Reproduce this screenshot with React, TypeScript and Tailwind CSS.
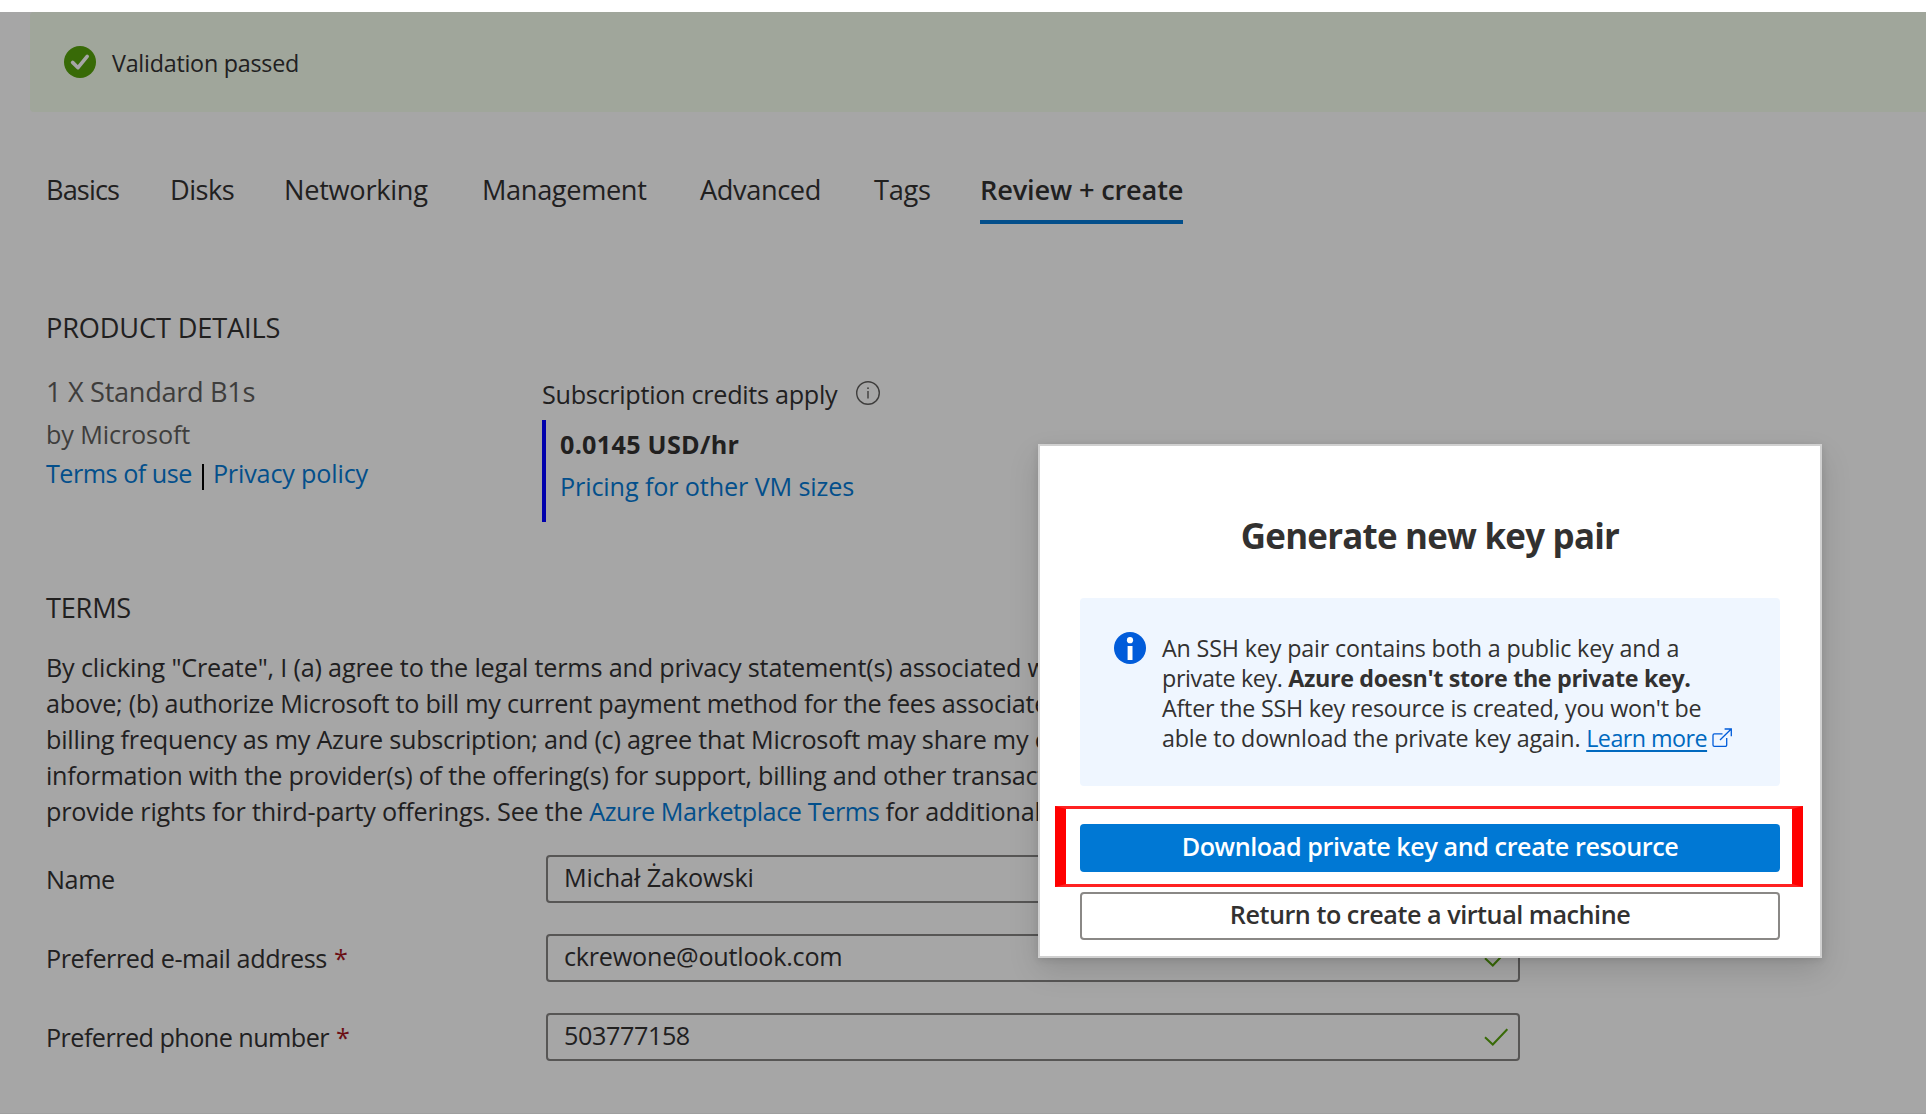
import type { ReactNode } from "react";

function PassedIcon() {
  return (
    <svg viewBox="0 0 32 32" className="mt-[34px] size-8 shrink-0">
      <circle cx="16" cy="16" r="16" fill="#386a07" />
      <path d="M8.6 16.4l5.4 5.3L23.2 10.4" fill="none" stroke="#a6a6a6" strokeWidth="3.6" strokeLinecap="round" strokeLinejoin="round" />
    </svg>
  );
}

function HintIcon() {
  return (
    <svg viewBox="0 0 24 24" className="mt-[5px] size-6 shrink-0">
      <circle cx="12" cy="12" r="11.3" fill="none" stroke="#3e3d3c" strokeWidth="1.4" />
      <path d="M12 10v7.5" stroke="#3e3d3c" strokeWidth="1.4" />
      <circle cx="12" cy="7.2" r="0.9" fill="#3e3d3c" />
    </svg>
  );
}

function InfoIcon() {
  return (
    <svg viewBox="0 0 32 32" className="mt-[34px] size-8 shrink-0">
      <circle cx="16" cy="16" r="16" fill="#015cda" />
      <circle cx="16" cy="8.2" r="3.1" fill="#fff" />
      <path d="M13.6 14h4.9v14h-4.9z" fill="#fff" />
    </svg>
  );
}

function ExternalIcon() {
  return (
    <svg viewBox="0 0 20 20" className="ml-[5px] inline-block size-5 align-[-1px]" fill="none" stroke="#015cda" strokeWidth="1.3">
      <path d="M10.5 5.9H2.4a1.4 1.4 0 0 0-1.4 1.4v9.7a1.4 1.4 0 0 0 1.4 1.4h10.9a1.4 1.4 0 0 0 1.4-1.4V10" />
      <path d="M8 12L19.2 1M12.6 1h6.7v7.2" />
    </svg>
  );
}

function Check() {
  return (
    <svg viewBox="0 0 24 18" className="mr-[10px] h-[18px] w-6" fill="none" stroke="#386a07" strokeWidth="2">
      <path d="M1 9.3l7.8 7.2L23.3 1.2" />
    </svg>
  );
}

const tabs = [
  ["Basics", "tracking-[-0.033em]"],
  ["Disks", "tracking-[-0.019em]"],
  ["Networking", "tracking-[-0.0105em]"],
  ["Management", "tracking-[-0.0135em]"],
  ["Advanced", "tracking-[-0.0145em]"],
  ["Tags", "tracking-[-0.011em]"],
];

function Field({ label, labelClass, value, valueClass, required }: { label: string; labelClass: string; value: string; valueClass: string; required?: boolean }) {
  return (
    <div className="flex h-12">
      <div className="w-[500px] pt-[6px] leading-9">
        <span className={labelClass}>{label}</span>
        {required && <span className="ml-[7px] text-[#6b0e14]">*</span>}
      </div>
      <div className="flex h-12 w-[974px] items-center justify-between rounded-[4px] border-2 border-[#575655] pl-4">
        <span className={`h-11 leading-10 ${valueClass}`}>{value}</span>
        {required && <Check />}
      </div>
    </div>
  );
}

function Line({ className, children }: { className: string; children: ReactNode }) {
  return <span className={`block ${className}`}>{children}</span>;
}

function KeyPairDialog() {
  return (
    <div className="absolute left-[1038px] top-[432px] h-[514px] w-[784px] border-2 border-[#d0d0d0] bg-white px-10 pt-[66px] text-[#323130] shadow-[0_12.8px_28.8px_rgba(0,0,0,0.132),0_2.4px_7.2px_rgba(0,0,0,0.108)]">
      <h2 className="text-center text-[34.9px] font-bold leading-[48px] tracking-[-0.022em]">Generate new key pair</h2>
      <div className="mt-[38px] flex h-[188px] gap-4 rounded-[4px] bg-[#eff6ff] pl-[34px]">
        <InfoIcon />
        <p className="pt-[35px] text-[23.3px] leading-[30px]">
          <Line className="tracking-[-0.0068em]">An SSH key pair contains both a public key and a</Line>
          <Line className="tracking-[-0.015em]">
            private key. <b>Azure doesn't store the private key.</b>
          </Line>
          <Line className="tracking-[-0.0102em]">After the SSH key resource is created, you won't be</Line>
          <Line className="tracking-[-0.008em]">
            able to download the private key again.{" "}
            <a className="tracking-[-0.023em] text-[#0069bf] underline decoration-2 underline-offset-[3px]">Learn more</a>
            <ExternalIcon />
          </Line>
        </p>
      </div>
      <button className="mt-[38px] block h-12 w-full rounded-[4px] bg-[#0078d4] pb-1 text-center font-semibold leading-[44px] tracking-[-0.0176em] text-white">
        Download private key and create resource
      </button>
      <button className="mt-5 block h-12 w-full rounded-[4px] border-2 border-[#8a8886] pb-1 text-center font-semibold leading-10 tracking-[-0.019em]">
        Return to create a virtual machine
      </button>
      <div className="pointer-events-none absolute left-[15px] top-[360px] h-[81px] w-[748px] border-x-[11px] border-y-[3px] border-x-[#ff0000] border-y-[#ff2222]" />
    </div>
  );
}

export default function App() {
  return (
    <div className="relative h-[1114px] w-[1926px] overflow-hidden whitespace-nowrap border-t-[12px] border-t-white bg-[#a6a6a6] font-['Open_Sans','Noto_Sans',sans-serif] text-[25.2px] text-[#21201f]">
      <div className="ml-[30px] flex h-[100px] gap-4 rounded-l-[4px] bg-[#a0a69b] pl-[34px]">
        <PassedIcon />
        <span className="pt-[35px] text-[23.3px] leading-8 tracking-[-0.01em]">Validation passed</span>
      </div>

      <div className="pl-[46px]">
        <nav className="mt-[60px] grid h-[52px] grid-cols-[124px_114px_198px_218px_174px_106px_203px] text-[27.2px] leading-9">
          {tabs.map(([name, spacing]) => (
            <span key={name} className={spacing}>{name}</span>
          ))}
          <span className="border-b-4 border-[#034f8b] font-semibold tracking-[-0.006em]">Review + create</span>
        </nav>

        <h3 className="mt-[86px] text-[27.2px] leading-9 tracking-[-0.006em]">PRODUCT DETAILS</h3>
        <div className="mt-[28px] flex h-[148px] leading-9">
          <div className="w-[496px] text-[#3e3d3c]">
            <div className="text-[27.2px] tracking-[-0.012em]">1 X Standard B1s</div>
            <div className="mt-[6px] tracking-[-0.005em]">by Microsoft</div>
            <div className="mt-[3px] flex text-[#034f8b]">
              <a className="tracking-[-0.02em]">Terms of use</a>
              <span className="ml-[10px] mr-[9px] mt-[9px] h-[26px] w-[2px] bg-black" />
              <a className="tracking-[-0.007em]">Privacy policy</a>
            </div>
          </div>
          <div>
            <div className="flex h-[46px] gap-[19px] pt-[2px]">
              <span className="tracking-[-0.0115em]">Subscription credits apply</span>
              <HintIcon />
            </div>
            <div className="h-[102px] border-l-4 border-[#0000ac] pl-[14px] pt-[6px]">
              <div className="font-bold tracking-[0.0107em]">0.0145 USD/hr</div>
              <a className="mt-[6px] block tracking-[-0.005em] text-[#034f8b]">Pricing for other VM sizes</a>
            </div>
          </div>
        </div>

        <h3 className="mt-[68px] text-[27.2px] leading-9 tracking-[-0.009em]">TERMS</h3>
        <p className="mt-[23px] leading-9">
          <Line className="tracking-[-0.007em]">By clicking "Create", I (a) agree to the legal terms and privacy statement(s) associated with</Line>
          <Line className="tracking-[-0.0097em]">above; (b) authorize Microsoft to bill my current payment method for the fees associated</Line>
          <Line className="tracking-[-0.0094em]">billing frequency as my Azure subscription; and (c) agree that Microsoft may share my contact</Line>
          <Line className="tracking-[-0.0094em]">information with the provider(s) of the offering(s) for support, billing and other transactional</Line>
          <Line className="tracking-[-0.0078em]">
            provide rights for third-party offerings. See the <a className="tracking-[-0.0165em] text-[#034f8b]">Azure Marketplace Terms</a> for additional
          </Line>
        </p>

        <div className="mt-[26px] flex flex-col gap-[31px]">
          <Field label="Name" labelClass="tracking-[-0.0165em]" value="Michał Żakowski" valueClass="tracking-[-0.004em]" />
          <Field label="Preferred e-mail address" labelClass="tracking-[-0.0166em]" value="ckrewone@outlook.com" valueClass="tracking-[-0.0095em]" required />
          <Field label="Preferred phone number" labelClass="tracking-[-0.0218em]" value="503777158" valueClass="tracking-[-0.0166em]" required />
        </div>
        <div className="-ml-[46px] mt-[52px] h-px bg-[#9f9f9f]" />
      </div>

      <KeyPairDialog />
    </div>
  );
}
